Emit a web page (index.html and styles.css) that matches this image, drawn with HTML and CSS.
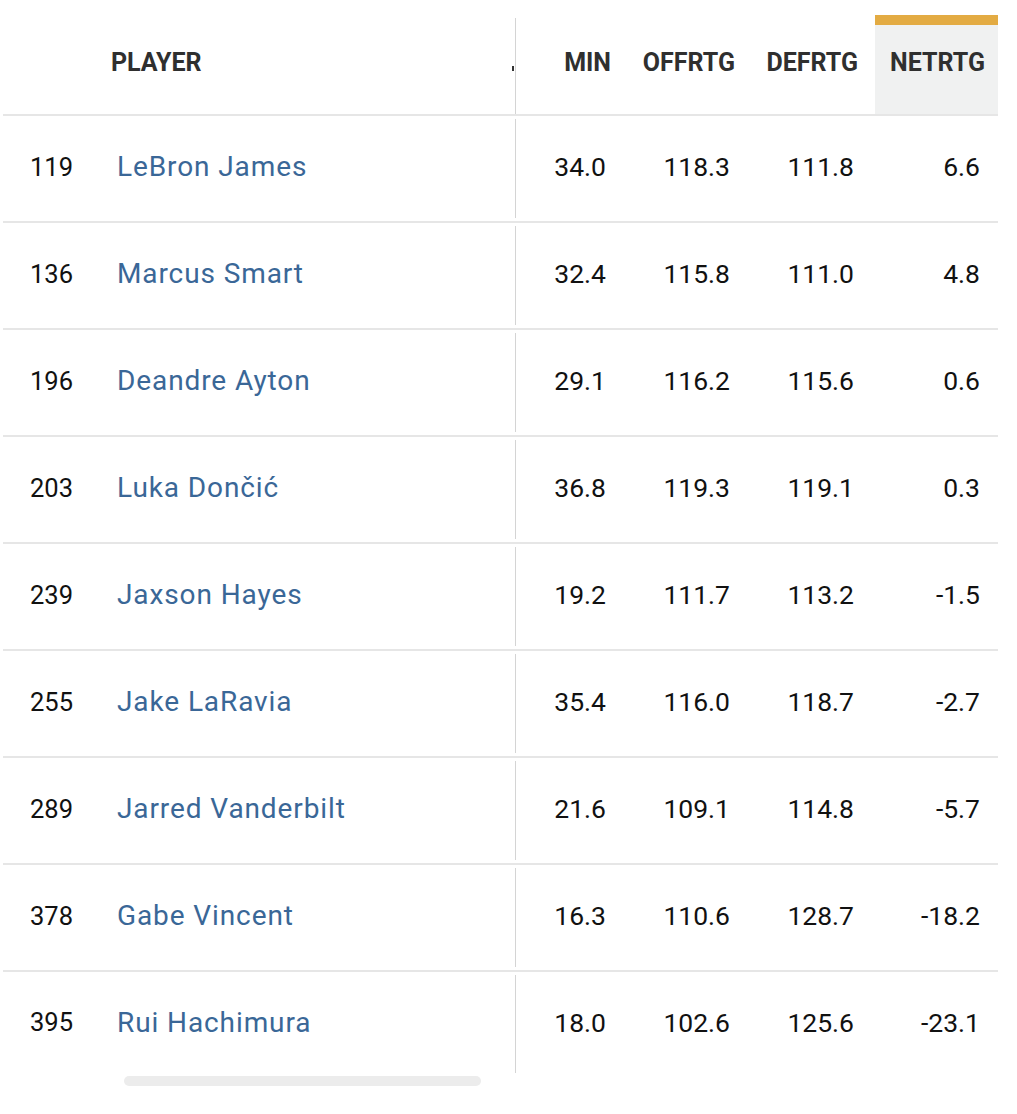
FILE: index.html
```html
<!DOCTYPE html>
<html lang="en">
<head>
<meta charset="utf-8">
<title>Player ratings</title>
<link rel="stylesheet" href="styles.css">
</head>
<body>
<div class="table">
  <div class="row head">
    <div class="frozen"><span class="h-player">PLAYER</span><span class="trunc"></span></div>
    <div class="c h c1">MIN</div>
    <div class="c h c2">OFFRTG</div>
    <div class="c h c3">DEFRTG</div>
    <div class="c h c4 sorted">NETRTG</div>
  </div>
  <div class="row"><div class="frozen"><span class="rank">119</span><a class="name">LeBron James</a></div><div class="c c1">34.0</div><div class="c c2">118.3</div><div class="c c3">111.8</div><div class="c c4">6.6</div></div>
  <div class="row"><div class="frozen"><span class="rank">136</span><a class="name">Marcus Smart</a></div><div class="c c1">32.4</div><div class="c c2">115.8</div><div class="c c3">111.0</div><div class="c c4">4.8</div></div>
  <div class="row"><div class="frozen"><span class="rank">196</span><a class="name">Deandre Ayton</a></div><div class="c c1">29.1</div><div class="c c2">116.2</div><div class="c c3">115.6</div><div class="c c4">0.6</div></div>
  <div class="row"><div class="frozen"><span class="rank">203</span><a class="name">Luka Dončić</a></div><div class="c c1">36.8</div><div class="c c2">119.3</div><div class="c c3">119.1</div><div class="c c4">0.3</div></div>
  <div class="row"><div class="frozen"><span class="rank">239</span><a class="name">Jaxson Hayes</a></div><div class="c c1">19.2</div><div class="c c2">111.7</div><div class="c c3">113.2</div><div class="c c4">-1.5</div></div>
  <div class="row"><div class="frozen"><span class="rank">255</span><a class="name">Jake LaRavia</a></div><div class="c c1">35.4</div><div class="c c2">116.0</div><div class="c c3">118.7</div><div class="c c4">-2.7</div></div>
  <div class="row"><div class="frozen"><span class="rank">289</span><a class="name">Jarred Vanderbilt</a></div><div class="c c1">21.6</div><div class="c c2">109.1</div><div class="c c3">114.8</div><div class="c c4">-5.7</div></div>
  <div class="row"><div class="frozen"><span class="rank">378</span><a class="name">Gabe Vincent</a></div><div class="c c1">16.3</div><div class="c c2">110.6</div><div class="c c3">128.7</div><div class="c c4">-18.2</div></div>
  <div class="row last"><div class="frozen"><span class="rank">395</span><a class="name">Rui Hachimura</a></div><div class="c c1">18.0</div><div class="c c2">102.6</div><div class="c c3">125.6</div><div class="c c4">-23.1</div></div>
</div>
<div class="scrollbar"></div>
</body>
</html>
```
FILE: styles.css
```css
html, body {
  margin: 0;
  padding: 0;
  background: #ffffff;
}

body {
  font-family: Roboto, "Liberation Sans", Arial, sans-serif;
  color: #111111;
}

.table {
  margin-left: 3px;
  width: 995px;
  padding-top: 15px;
}

.row {
  display: grid;
  grid-template-columns: 513px 110px 124px 125px 123px;
  height: 107px;
  box-sizing: border-box;
  border-bottom: 2px solid #e6e6e6;
}

.row.head {
  height: 101px;
}

.row.last {
  height: 104px;
  border-bottom: none;
}

.frozen {
  display: flex;
  align-items: center;
  border-right: 1px solid #d4d4d4;
  margin: 3px 0;
  padding-bottom: 4px;
}

.head .frozen {
  margin: 3px 0 0 0;
  padding: 7px 0 15px 0;
}

.h-player {
  padding-left: 108px;
  font-size: 25px;
  font-weight: 700;
  color: #2f2f2f;
}

.trunc {
  margin-left: auto;
  margin-right: 1px;
  margin-top: 13px;
  width: 2px;
  height: 5px;
  background: #333333;
}

.rank {
  width: 87px;
  padding-left: 27px;
  font-size: 25.5px;
  color: #111111;
}

.name {
  font-size: 28px;
  letter-spacing: 0.9px;
  color: #3a6797;
  text-decoration: none;
}

.c {
  display: flex;
  align-items: center;
  justify-content: flex-end;
  font-size: 26.5px;
  color: #111111;
  padding-bottom: 4px;
}

.c1 { padding-right: 20px; }
.c2 { padding-right: 20px; }
.c3 { padding-right: 21px; }
.c4 { padding-right: 18px; }

.c.h {
  font-size: 25px;
  font-weight: 700;
  color: #2f2f2f;
  padding-top: 10px;
  padding-bottom: 15px;
}

.c1.h { padding-right: 15px; }
.c2.h { padding-right: 15px; }
.c3.h { padding-right: 17px; }
.c4.h { padding-right: 13px; }

.c.h.sorted {
  padding-top: 0;
  border-top: 10px solid #e3ab43;
  background: #f0f1f1;
}

.scrollbar {
  margin-left: 124px;
  width: 357px;
  height: 10px;
  border-radius: 5px;
  background: #ececec;
}
```
